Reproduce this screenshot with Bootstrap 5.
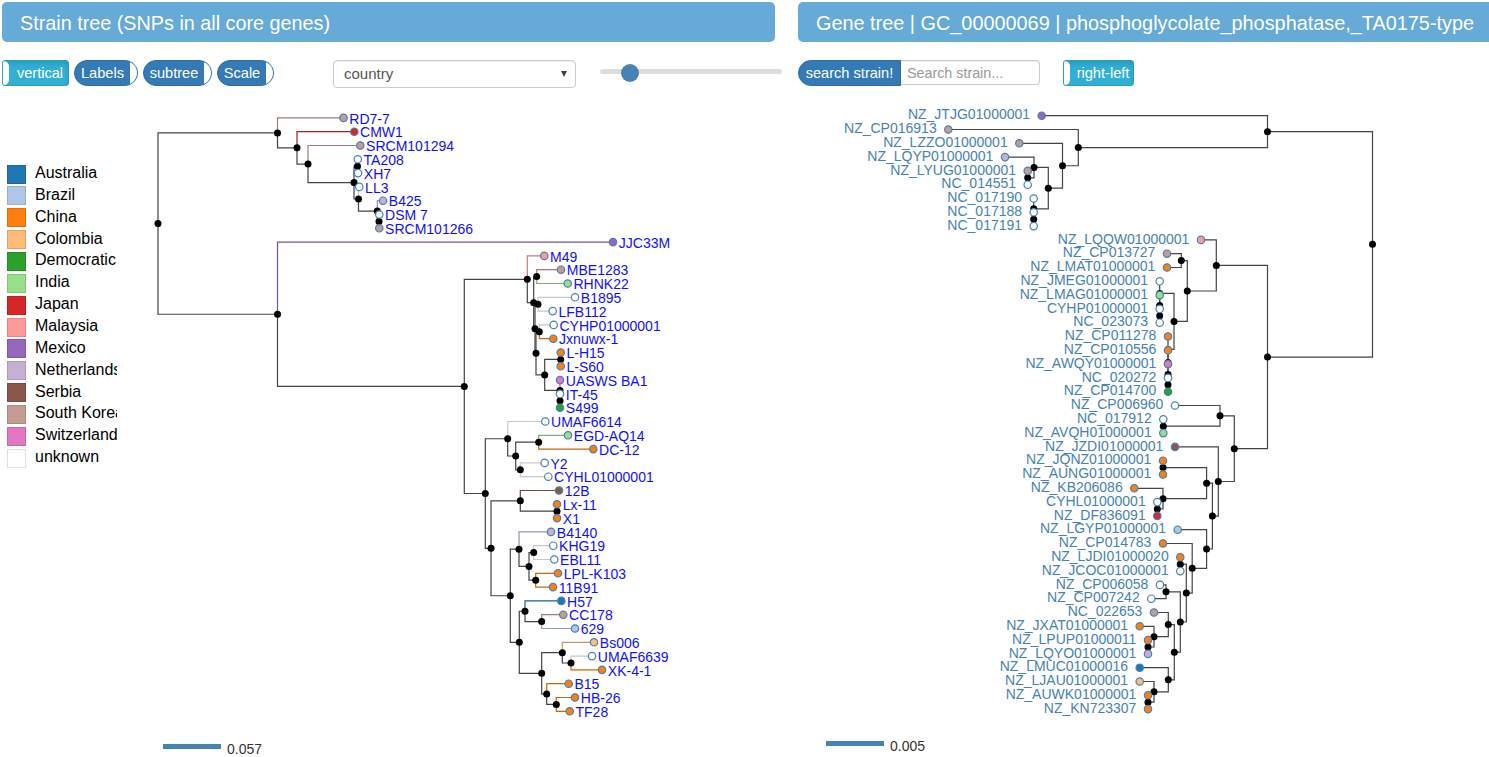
<!DOCTYPE html>
<html lang="en">
<head>
<meta charset="utf-8">
<title>Strain tree and gene tree</title>
<link href="https://cdn.jsdelivr.net/npm/bootstrap@5.3.0/dist/css/bootstrap.min.css" rel="stylesheet">
<style>
body{font-family:"Liberation Sans",Arial,sans-serif;font-size:15px;line-height:20px;color:#333;width:1489px;height:757px;overflow:hidden;background:#fff}
.pane-left{width:773px;margin:2px 23px 0 2px}
.pane-right{width:720px;margin-top:2px}
.tree-title{height:40px;line-height:43px;background:#66aad7;border-radius:5px;font-size:19.86px;color:#fff;padding-left:18px;white-space:nowrap}
.pane-left .tree-title{font-size:19.8px}
.tools{height:48px;padding-top:18px}
.tools>*{flex-shrink:0}
.tg{height:26px;line-height:24px;font-size:14.6px;color:#fff;padding:0;border:1px solid #2e6da4;background:#337ab7;border-radius:13px;white-space:nowrap;overflow:hidden;text-align:left;display:flex;--bs-btn-font-size:14.6px}
.tg:hover{color:#fff}
.tg .lab{flex:1;text-align:center}
.tg .knob{width:7px;background:#fff;border-radius:4px 13px 13px 4px;flex:none}
.tg-on{border-color:#28a1c5;background:#31b0d5;border-radius:3px;box-shadow:inset 0 3px 5px rgba(0,0,0,.125)}
.tg-on .knob{width:6px;border-radius:1px 6px 6px 1px}
.tg-on .lab{padding-left:3px}
.pick{width:243px;height:28px;margin-left:59px;border:1px solid #ccc;border-radius:4px;box-shadow:inset 0 1px 1px rgba(0,0,0,.075);color:#555;line-height:26px;padding:0 8px 0 10px}
.caret{width:0;height:0;border:3.2px solid transparent;border-top:6px solid #444;border-bottom:0}
.slide{width:182px;height:5px;border-radius:3px;background:#ddd;margin:9px 0 0 24px}
.slide i{position:absolute;left:21px;top:-5px;width:18px;height:18px;border-radius:50%;background:#4682b4}
.find{width:103px;border-radius:13px 0 0 13px}
.findbox{width:139px;height:25px;border:1px solid #ccc;border-left:0;border-radius:0 4px 4px 0;box-shadow:inset 0 1px 1px rgba(0,0,0,.075);padding:0 0 0 6px;font-size:14.3px;line-height:23px;outline:0}
.findbox::placeholder{color:#999;opacity:1}
.keys{width:110px;margin:73px 2px 0 5px;font-size:16px;color:#000;overflow:hidden;flex:none}
.keys div{height:21.86px;line-height:19px;white-space:nowrap}
.keys i{width:19px;height:19px;margin:1.5px 9px 0 0;border:1px solid rgba(0,0,0,.12);flex:none}
svg{display:block}
svg text{font-size:14px}
</style>
</head>
<body>
<main class="d-flex">
  <section class="pane-left flex-shrink-0">
    <div class="tree-title">Strain tree (SNPs in all core genes)</div>
    <div class="tools d-flex align-items-start">
      <button class="btn tg tg-on" style="width:67px"><span class="knob"></span><span class="lab">vertical</span></button>
      <button class="btn tg" style="width:64px;margin-left:5px"><span class="lab">Labels</span><span class="knob"></span></button>
      <button class="btn tg" style="width:69px;margin-left:5px"><span class="lab">subtree</span><span class="knob"></span></button>
      <button class="btn tg" style="width:57px;margin-left:5px"><span class="lab">Scale</span><span class="knob"></span></button>
      <div class="pick d-flex justify-content-between align-items-center"><span>country</span><span class="caret"></span></div>
      <div class="slide position-relative"><i></i></div>
    </div>
    <div class="d-flex">
      <div class="keys" id="keys"></div>
      <svg id="strain" width="656" height="667" viewBox="119 90 656 667"></svg>
    </div>
  </section>
  <section class="pane-right flex-shrink-0">
    <div class="tree-title">Gene tree | GC_00000069 | phosphoglycolate_phosphatase,_TA0175-type</div>
    <div class="tools d-flex align-items-start">
      <button class="btn tg find"><span class="lab">search strain!</span></button>
      <input class="findbox" placeholder="Search strain...">
      <button class="btn tg tg-on" style="width:71px;margin-left:23px"><span class="knob"></span><span class="lab">right-left</span></button>
    </div>
    <svg id="gene" width="691" height="667" viewBox="798 90 691 667"></svg>
  </section>
</main>
<script src="https://cdn.jsdelivr.net/npm/bootstrap@5.3.0/dist/js/bootstrap.bundle.min.js"></script>
<script>
const C={Au:'#1f77b4',Br:'#aec7e8',Ch:'#ff7f0e',Co:'#ffbb78',De:'#2ca02c',In:'#98df8a',Ja:'#d62728',Ma:'#ff9896',Me:'#9467bd',Ne:'#c5b0d5',Se:'#8c564b',So:'#c49c94',Sw:'#e377c2',un:'#ffffff'};
const names=['Australia','Brazil','China','Colombia','Democratic Republic','India','Japan','Malaysia','Mexico','Netherlands','Serbia','South Korea','Switzerland','unknown'];
document.getElementById('keys').innerHTML=names.map(n=>`<div class="d-flex"><i style="background:${C[n.slice(0,2)]}"></i>${n}</div>`).join('');

// inner node: [x, child, child]; leaf: 'label|x|country'
const strain=[158,
 [277.5,'RD7-7|343.5|So',[297,'CMW1|354.3|Ja',[308,'SRCM101294|360.3|So',[354,
  [357.5,'TA208|357.8|un','XH7|358|un'],
  [358.5,'LL3|359.3|un',[377.3,'B425|383|Ne',[379,'DSM 7|379.3|un','SRCM101266|379.3|So']]]]]]],
 [277.5,'JJC33M|613|Me',[464.3,
  [527.3,'M49|544.3|Ma',[533.7,
   [536.7,'MBE1283|561|So','RHNK22|567.7|In'],
   [535,[538,'B1895|575|un','LFB112|552.7|un'],
    [536,[539.3,'CYHP01000001|553.7|un','Jxnuwx-1|553.3|Ch'],
     [544.7,[560.7,'L-H15|560.7|Ch','L-S60|560.7|Ch'],
      [560,'UASWS BA1|560|Sw',[560,'IT-45|560|un','S499|560|De']]]]]]],
  [485.3,
   [507.7,'UMAF6614|545.3|un',[515.7,
    [538.7,'EGD-AQ14|568|In','DC-12|593.3|Ch'],[520.3,'Y2|544.7|un','CYHL01000001|548.3|un']]],
   [491,[520.3,'12B|559|Se',[557,'Lx-11|557|Ch','X1|557|Ch']],
    [510.3,
     [519,'B4140|551|Ne',[529,[533.7,'KHG19|553.3|un','EBL11|554.3|un'],[535.7,'LPL-K103|558|Ch','11B91|553|Ch']]],
     [519.3,
      [525,'H57|561.3|Au',[541.7,'CC178|563.3|So','629|575|Br']],
      [541.7,[562.3,'Bs006|594|Co',[571,'UMAF6639|592|un','XK-4-1|602|Ch']],
       [546.7,'B15|568.7|Ch',[556.3,'HB-26|575|Ch','TF28|569.7|Ch']]]]]]]]]];
const gene=[1372.5,
 [1267.5,'NZ_JTJG01000001|1041.7|Me',[1078.3,'NZ_CP016913|948.3|So',[1062.5,'NZ_LZZO01000001|1019.3|So',[1048.3,
  [1034,'NZ_LQYP01000001|1005|Ne',[1027.7,'NZ_LYUG01000001|1027.7|So','NC_014551|1027.7|un']],
  [1033.7,'NC_017190|1033.7|un',[1033.7,'NC_017188|1033.7|un','NC_017191|1033.7|un']]]]]],
 [1267.5,
  [1216.3,'NZ_LQQW01000001|1201|Ma',[1187.3,
   [1181.3,'NZ_CP013727|1167|So','NZ_LMAT01000001|1167|Ch'],
   [1174,[1159.7,'NZ_JMEG01000001|1159.7|un',[1159.7,'NZ_LMAG01000001|1159.7|In',[1159.7,'CYHP01000001|1159.7|un','NC_023073|1159.7|un']]],
    [1168,'NZ_CP011278|1168|Ch',[1168,'NZ_CP010556|1168|Ch',[1168,'NZ_AWQY01000001|1168|Sw',[1168,'NC_020272|1168|un','NZ_CP014700|1168|De']]]]]]],
  [1234.3,
   [1220,'NZ_CP006960|1175|un',[1163.3,'NC_017912|1163.3|un','NZ_AVQH01000001|1163.3|In']],
   [1218.3,'NZ_JZDI01000001|1175|Se',[1212.4,
    [1206.6,[1163,'NZ_JQNZ01000001|1163|Ch','NZ_AUNG01000001|1163|Ch'],
     [1163,'NZ_KB206086|1134.3|Ch',[1157.3,'CYHL01000001|1157.3|un','NZ_DF836091|1157.3|Ja']]],
    [1206.6,'NZ_LGYP01000001|1177.7|Br',[1192.2,'NZ_CP014783|1163|Ch',[1186.3,
     [1180.3,'NZ_LJDI01000020|1180.3|Ch','NZ_JCOC01000001|1180.3|un'],
     [1180.3,[1166,'NZ_CP006058|1160|un','NZ_CP007242|1151.3|un'],
      [1174.3,[1168.3,'NC_022653|1154|So',[1154,'NZ_JXAT01000001|1139.7|Ch',[1148,'NZ_LPUP01000011|1148|Ch','NZ_LQYO01000001|1148|Ne']]],
       [1168.3,'NZ_LMUC01000016|1139.7|Au',[1154,'NZ_LJAU01000001|1139.7|Co',[1148,'NZ_AUWK01000001|1148|Ch','NZ_KN723307|1148|Ch']]]]]]]]]]]]];

function dark(k){
  if(k==='un')return '#c8c8c8';
  return '#'+[1,3,5].map(i=>Math.round(parseInt(C[k].substr(i,2),16)*.8).toString(16).padStart(2,'0')).join('');
}
function draw(id,tree,o){
  let n=0,links='',nodes='',leaves='',labels='';
  function walk(t){
    if(typeof t==='string'){
      const [name,xs,k]=t.split('|'),x=+xs,y=o.y0+13.8*n,b=Math.floor(o.base+13.8*n+.001);
      n++;
      leaves+=`<circle cx="${x}" cy="${y}" r="3.7" fill="${C[k]}" stroke="#4682b4" stroke-width="1.2"/>`;
      labels+=`<text x="${x+o.dx}" y="${b}" text-anchor="${o.anchor}" fill="${o.ink}">${name}</text>`;
      return {x,y,c:o.tint?dark(k):'#444'};
    }
    const a=walk(t[1]),b=walk(t[2]),y=(a.y+b.y)/2;
    for(const c of [a,b])links+=`<path d="M${t[0]} ${y}V${c.y}H${c.x}" stroke="${c.c}"/>`;
    nodes+=`<circle cx="${t[0]}" cy="${y}" r="3.5"/>`;
    return {x:t[0],y,c:'#444'};
  }
  walk(tree);
  document.getElementById(id).innerHTML=`<g fill="none" stroke-width="1.2">${links}</g>${nodes}${leaves}${labels}`+
    `<rect x="${o.sx}" y="${o.sy}" width="58" height="5" fill="#4682b4"/><text x="${o.sx+64}" y="${o.sy+10}" fill="#333">${o.scale}</text>`;
}
draw('strain',strain,{y0:117.9,base:124,dx:5.8,anchor:'start',ink:'#0f0fff',tint:true,sx:163,sy:744,scale:'0.057'});
draw('gene',gene,{y0:115.7,base:119.9,dx:-11.6,anchor:'end',ink:'#4682b4',sx:826,sy:741,scale:'0.005'});
</script>
</body>
</html>
